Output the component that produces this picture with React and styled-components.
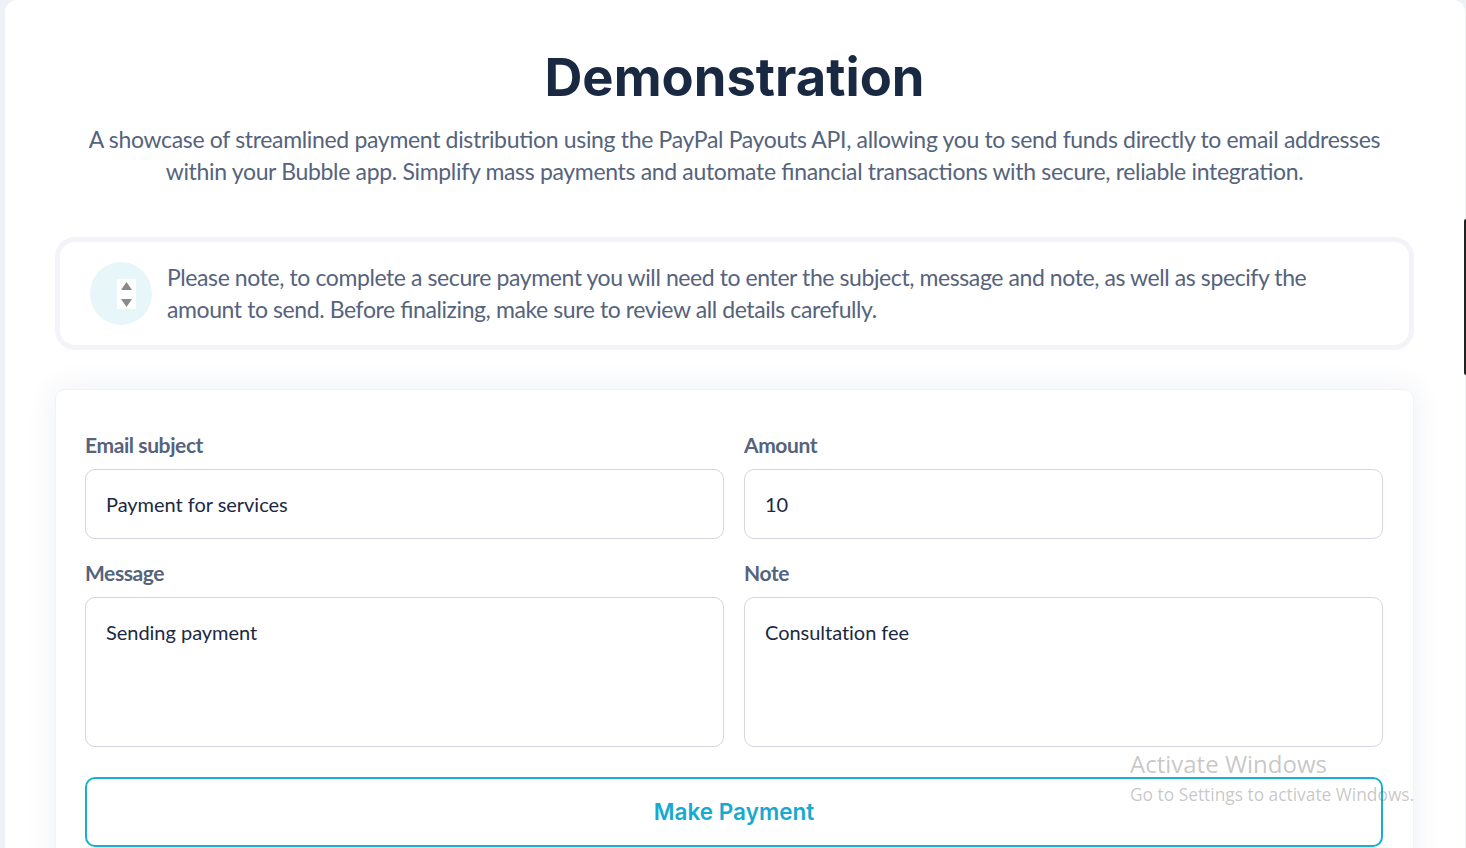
import React from "react";
import styled, { createGlobalStyle } from "styled-components";

const Global = createGlobalStyle`
  html, body { margin: 0; padding: 0; height: 100%; overflow: hidden; background: #eef2f6; }
  * { box-sizing: border-box; }
`;

const Page = styled.div`
  position: relative;
  height: 848px;
  overflow: hidden;
  padding: 0 1px 0 5px;
  background: #eef2f6;
`;

const Sheet = styled.main`
  height: 848px;
  background: #fff;
  border-radius: 12px 12px 0 0;
  padding: 45px 51px 0 50px;
  font-family: Lato, sans-serif;
`;

const Title = styled.h1`
  margin: 0;
  height: 64px;
  text-align: center;
  font-family: Inter, sans-serif;
  font-size: 52.5px;
  line-height: 64px;
  font-weight: 700;
  color: #1a2942;
`;

const Lead = styled.p`
  margin: 0 auto;
  width: 1310px;
  padding-top: 14px;
  text-align: center;
  font-size: 23px;
  line-height: 32px;
  letter-spacing: -0.33px;
  font-feature-settings: "liga" 1;
  color: #55637d;
`;

const Notice = styled.section`
  display: flex;
  align-items: center;
  gap: 15px;
  height: 113px;
  margin-top: 50px;
  padding: 0 30px;
  background: #fff;
  border: 5px solid #f2f4f9;
  border-radius: 20px;
  font-size: 23px;
  line-height: 32px;
  letter-spacing: -0.41px;
  font-feature-settings: "liga" 1;
  color: #55637d;
`;

const Badge = styled.div`
  flex: none;
  display: flex;
  align-items: center;
  justify-content: center;
  width: 62px;
  height: 63px;
  padding-left: 11px;
  border-radius: 50%;
  background: #e7f6f9;
`;

const Spinner = styled.svg`
  display: block;
  width: 19px;
  height: 30px;
`;

const NoticeText = styled.div`
  padding-bottom: 2px;
`;

const FormCard = styled.section`
  margin-top: 39px;
  height: 560px;
  padding: 40px 30px 0 29px;
  background: #fff;
  border: 1px solid #f1f3f8;
  border-radius: 10px;
  box-shadow: 0 0 30px rgba(60, 80, 130, 0.09);
`;

const Grid = styled.div`
  display: grid;
  grid-template-columns: 1fr 1fr;
  column-gap: 20px;
  row-gap: 19px;
`;

const Field = styled.label`
  display: flex;
  flex-direction: column;
  gap: 9px;
`;

const FieldLabel = styled.span`
  font-size: 21px;
  line-height: 30px;
  font-weight: 700;
  letter-spacing: -0.4px;
  color: #55637d;
`;

const InputBox = styled.div`
  height: ${(p) => (p.$tall ? 150 : 70)}px;
  padding: ${(p) => (p.$tall ? "21px" : "0")} 20px 0;
  display: flex;
  align-items: ${(p) => (p.$tall ? "flex-start" : "center")};
  background: #fff;
  border: 1px solid #d4d7e3;
  border-radius: 10px;
  font-size: 20px;
  line-height: 26px;
  letter-spacing: -0.03px;
  color: #1a2942;
`;

const Submit = styled.button`
  display: block;
  width: 100%;
  height: 70px;
  margin-top: 30px;
  padding: 0 0 2px;
  background: #fff;
  border: 2px solid #17b0d3;
  border-radius: 10px;
  font-family: Inter, sans-serif;
  font-size: 22.5px;
  font-weight: 600;
  color: #17a9cf;
`;

const Watermark = styled.aside`
  position: absolute;
  left: 1130px;
  top: 748px;
  font-family: "Open Sans", sans-serif;
  color: rgba(120, 120, 120, 0.42);
  white-space: nowrap;
  pointer-events: none;
`;

const WatermarkTitle = styled.div`
  font-size: 24px;
  line-height: 32px;
`;

const WatermarkText = styled.div`
  font-size: 17.35px;
  line-height: 24px;
  margin-top: 2px;
`;

const ScrollThumb = styled.div`
  position: absolute;
  right: 0;
  top: 219px;
  width: 2px;
  height: 156px;
  background: #222;
  border-radius: 2px 0 0 2px;
`;

export default function App() {
  return (
    <>
      <Global />
      <Page>
        <Sheet>
          <Title>Demonstration</Title>
          <Lead>
            A showcase of streamlined payment distribution using the PayPal Payouts API, allowing you to send funds directly to email addresses within your Bubble app. Simplify mass payments and automate financial transactions with secure, reliable integration.
          </Lead>
          <Notice>
            <Badge>
              <Spinner viewBox="0 0 19 30">
                <rect width="19" height="30" fill="#fff" />
                <path d="M9.5 3 15 11H4Z M4 20H15L9.5 28Z" fill="#8a8a8a" />
              </Spinner>
            </Badge>
            <NoticeText>
              Please note, to complete a secure payment you will need to enter the subject, message and note, as well as specify the amount to send. Before finalizing, make sure to review all details carefully.
            </NoticeText>
          </Notice>
          <FormCard>
            <Grid>
              <Field>
                <FieldLabel>Email subject</FieldLabel>
                <InputBox>Payment for services</InputBox>
              </Field>
              <Field>
                <FieldLabel>Amount</FieldLabel>
                <InputBox>10</InputBox>
              </Field>
              <Field>
                <FieldLabel>Message</FieldLabel>
                <InputBox $tall>Sending payment</InputBox>
              </Field>
              <Field>
                <FieldLabel>Note</FieldLabel>
                <InputBox $tall>Consultation fee</InputBox>
              </Field>
            </Grid>
            <Submit>Make Payment</Submit>
          </FormCard>
        </Sheet>
        <ScrollThumb />
        <Watermark>
          <WatermarkTitle>Activate Windows</WatermarkTitle>
          <WatermarkText>Go to Settings to activate Windows.</WatermarkText>
        </Watermark>
      </Page>
    </>
  );
}
